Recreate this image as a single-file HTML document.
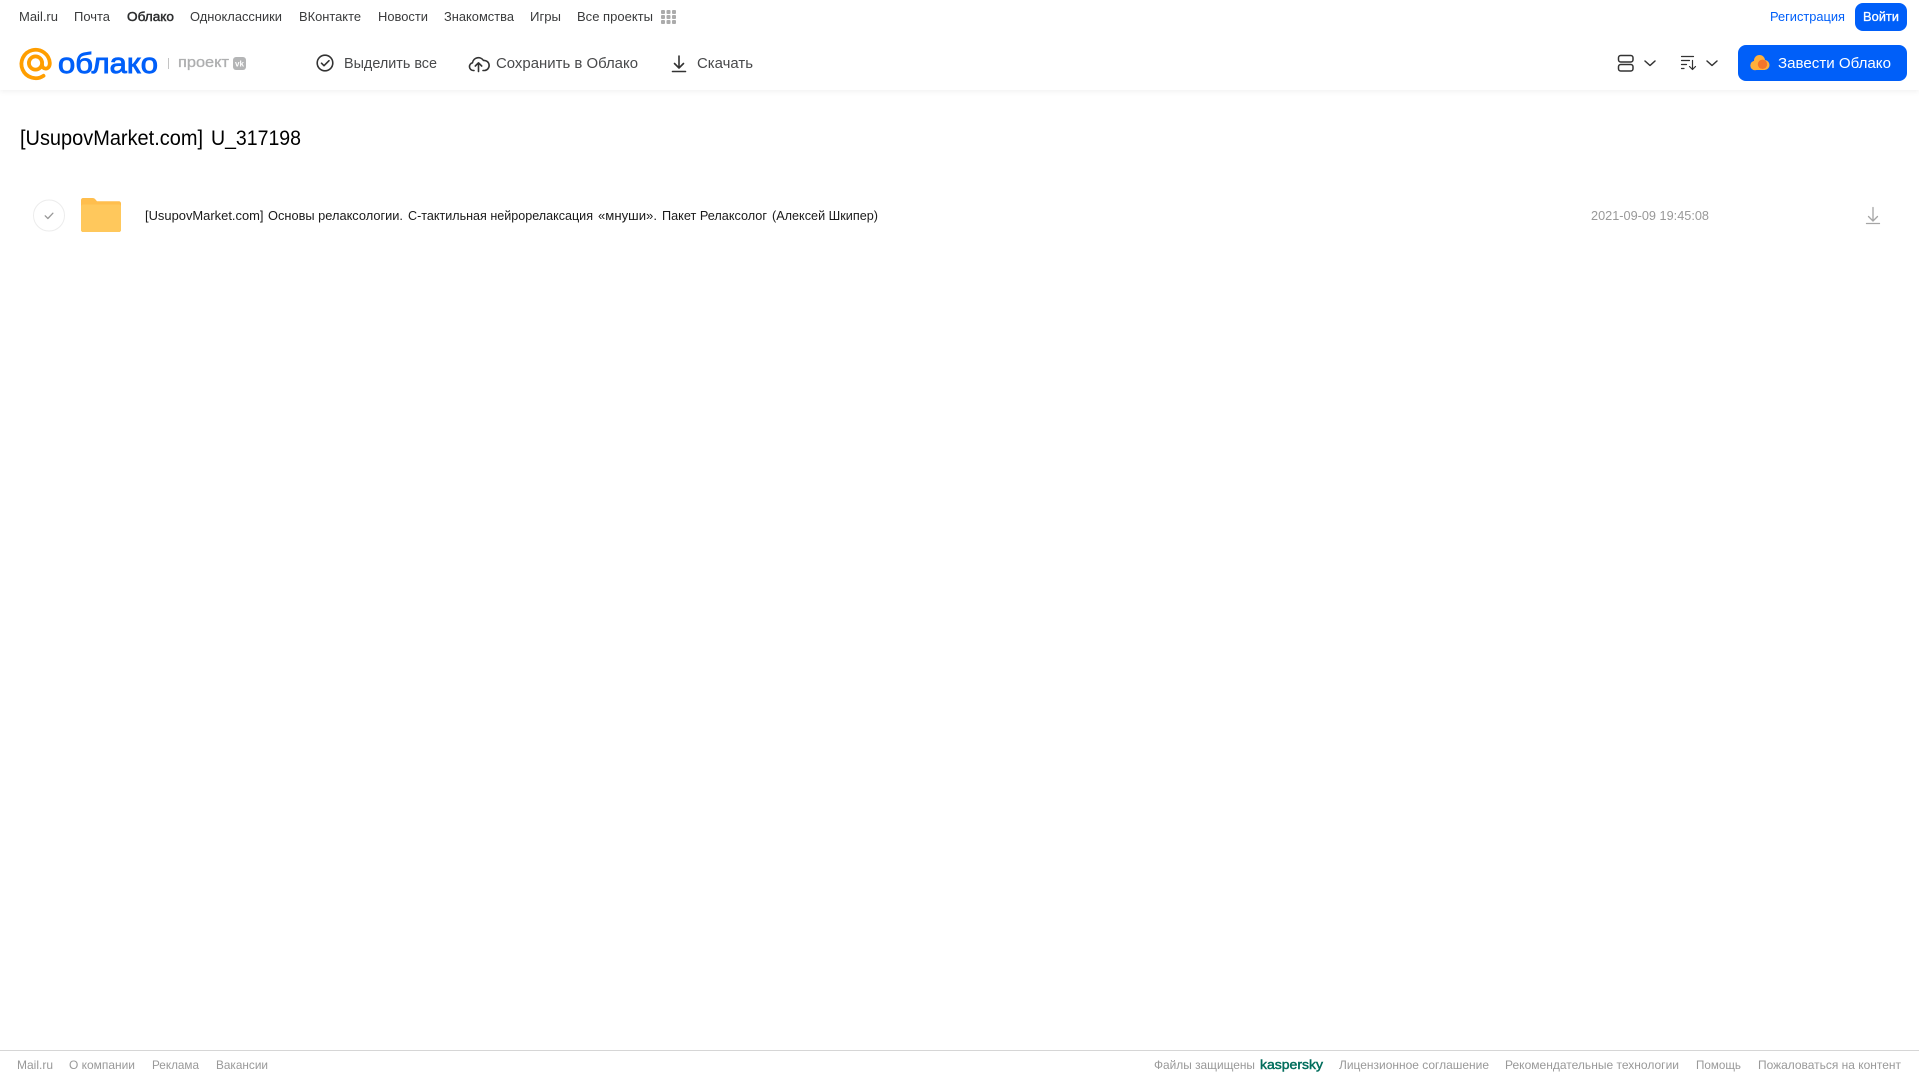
<!DOCTYPE html>
<html lang="ru">
<head>
<meta charset="utf-8">
<title>Облако</title>
<style>
html,body{margin:0;padding:0;background:#fff;width:1919px;height:1079px;overflow:hidden}
.shadow{position:absolute;left:0;top:0;width:1919px;height:90px;background:#fff;box-shadow:0 1px 6px rgba(0,0,0,.07)}
svg.page{position:absolute;left:0;top:0}
text{font-family:"Liberation Sans",sans-serif}
.nav{font-size:13px;fill:#3a3b3c}
.act{font-size:14.5px;fill:#48494b}
.foot{font-size:12px;fill:#999}
.row{font-size:13px;fill:#1a1a1a}
.ttl{font-size:21.5px;fill:#000}
</style>
</head>
<body>
<div class="shadow"></div>
<svg class="page" width="1919" height="1079" viewBox="0 0 1919 1079" xmlns="http://www.w3.org/2000/svg">
<!-- top nav -->
<text class="nav" x="19" y="21" textLength="39" lengthAdjust="spacingAndGlyphs">Mail.ru</text>
<text class="nav" x="74" y="21" textLength="36" lengthAdjust="spacingAndGlyphs">Почта</text>
<text class="nav" x="127" y="21" textLength="47" lengthAdjust="spacingAndGlyphs" style="fill:#2c2d2e;stroke:#2c2d2e;stroke-width:.45px">Облако</text>
<text class="nav" x="190" y="21" textLength="92" lengthAdjust="spacingAndGlyphs">Одноклассники</text>
<text class="nav" x="299" y="21" textLength="62" lengthAdjust="spacingAndGlyphs">ВКонтакте</text>
<text class="nav" x="378" y="21" textLength="50" lengthAdjust="spacingAndGlyphs">Новости</text>
<text class="nav" x="444" y="21" textLength="70" lengthAdjust="spacingAndGlyphs">Знакомства</text>
<text class="nav" x="530" y="21" textLength="31" lengthAdjust="spacingAndGlyphs">Игры</text>
<text class="nav" x="577" y="21" textLength="76" lengthAdjust="spacingAndGlyphs">Все проекты</text>
<g fill="#ababab">
<rect x="661" y="10" width="4" height="4" rx="1"/><rect x="666.5" y="10" width="4" height="4" rx="1"/><rect x="672" y="10" width="4" height="4" rx="1"/>
<rect x="661" y="15" width="4" height="4" rx="1"/><rect x="666.5" y="15" width="4" height="4" rx="1"/><rect x="672" y="15" width="4" height="4" rx="1"/>
<rect x="661" y="20" width="4" height="4" rx="1"/><rect x="666.5" y="20" width="4" height="4" rx="1"/><rect x="672" y="20" width="4" height="4" rx="1"/>
</g>
<text class="nav" x="1770" y="21" textLength="75" lengthAdjust="spacingAndGlyphs" style="fill:#005ff9">Регистрация</text>
<rect x="1855" y="3" width="52" height="28" rx="8" fill="#005ff9"/>
<text class="nav" x="1863" y="21" textLength="36" lengthAdjust="spacingAndGlyphs" style="fill:#fff;stroke:#fff;stroke-width:.3px">Войти</text>

<!-- logo -->
<g fill="none" stroke="#ff9e00" stroke-width="3.8" stroke-linecap="round">
<circle cx="35.5" cy="63" r="6.6"/>
<path d="M43.5 75.8A14.2 14.2 0 1 1 49.8 63c0 3.300-1.500 5.600-4.200 5.600-1.800 0-3.400-1.300-3.500-3.600"/>
</g>
<text x="58" y="73" textLength="100" lengthAdjust="spacingAndGlyphs" style="font-size:29px;fill:#005ff9;stroke:#005ff9;stroke-width:.9px">облако</text>
<rect x="168" y="58" width="1" height="11" fill="#c4c4c4"/>
<text x="178" y="67" textLength="51" lengthAdjust="spacingAndGlyphs" style="font-size:14.5px;fill:#aeafb0;stroke:#aeafb0;stroke-width:.3px">проект</text>
<rect x="233" y="57" width="13" height="13" rx="3" fill="#b4b5b6"/>
<text x="235" y="66.500" textLength="9" lengthAdjust="spacingAndGlyphs" style="font-size:8px;font-weight:700;fill:#fff">vk</text>

<!-- actions -->
<g fill="none" stroke="#333" stroke-width="1.600" stroke-linecap="round" stroke-linejoin="round">
<circle cx="325" cy="63" r="7.800"/>
<path d="M321.500 63.200l2.500 2.500 5-5"/>
<path d="M474 70.500h-.8a3.900 3.900 0 0 1-.7-7.700 6 6 0 0 1 11-2.300 4.800 4.800 0 0 1 1.200 10h-1.700"/>
<path d="M478.500 71.500V63M475.300 66l3.200-3.200 3.200 3.200"/>
<path d="M679 56v12M674.500 63.500l4.500 4.500 4.500-4.500"/>
<path d="M672.500 71.500h13"/>
</g>
<text class="act" x="344" y="68" textLength="93" lengthAdjust="spacingAndGlyphs">Выделить все</text>
<text class="act" x="496" y="68" textLength="142" lengthAdjust="spacingAndGlyphs">Сохранить в Облако</text>
<text class="act" x="697" y="68" textLength="56" lengthAdjust="spacingAndGlyphs">Скачать</text>

<!-- right tools -->
<g fill="none" stroke="#333" stroke-width="1.500" stroke-linecap="round" stroke-linejoin="round">
<rect x="1618.500" y="55.500" width="14.500" height="6.500" rx="2.200"/>
<rect x="1618.500" y="64.500" width="14.500" height="6.500" rx="2.200"/>
<path d="M1645 61l5 4.500 5-4.500"/>
<path d="M1707 61l5 4.500 5-4.500"/>
<path d="M1681.500 56.500h12M1681.500 60.500h8M1681.500 64.500h5M1681.500 68.500h2.500M1692.500 60.500v9M1689.500 66.500l3 3 3-3" stroke-width="1.200"/>
</g>
<rect x="1738" y="45" width="169" height="36" rx="8" fill="#005ff9"/>
<g fill="#ffb03b">
<circle cx="1755" cy="65.500" r="4.700"/>
<circle cx="1759.500" cy="60.500" r="5.500"/>
<circle cx="1764.500" cy="65" r="5"/>
<rect x="1755" y="63" width="10" height="7"/>
</g>
<circle cx="1762.500" cy="64.300" r="4.700" fill="#f5752a"/>
<text x="1778" y="68" textLength="113" lengthAdjust="spacingAndGlyphs" style="font-size:14.5px;fill:#fff">Завести Облако</text>

<!-- title -->
<text class="ttl" x="20" y="145" textLength="183" lengthAdjust="spacingAndGlyphs">[UsupovMarket.com]</text>
<text class="ttl" x="211" y="145" textLength="90" lengthAdjust="spacingAndGlyphs">U_317198</text>

<!-- row -->
<circle cx="49" cy="215.500" r="15.500" fill="#fff" stroke="#ececec" stroke-width="1"/>
<path d="M45.200 215.800l2.700 2.700 5-5.300" fill="none" stroke="#999" stroke-width="1.300" stroke-linecap="round" stroke-linejoin="round"/>
<path d="M83 198h9.500c1.500 0 2.200.6 3 1.500l1.500 1.700h22c1.100 0 2 .9 2 2V230c0 1.100-.9 2-2 2H83c-1.100 0-2-.9-2-2V200c0-1.100.9-2 2-2z" fill="#ffbe4d"/>
<path d="M81 206.500c0-1.100.9-2 2-2h36c1.100 0 2 .9 2 2V230c0 1.100-.9 2-2 2H83c-1.100 0-2-.9-2-2z" fill="#ffc85c"/>
<text class="row" x="145" y="220" textLength="118.500" lengthAdjust="spacingAndGlyphs">[UsupovMarket.com]</text>
<text class="row" x="268" y="220" textLength="135" lengthAdjust="spacingAndGlyphs">Основы релаксологии.</text>
<text class="row" x="408" y="220" textLength="185" lengthAdjust="spacingAndGlyphs">С-тактильная нейрорелаксация</text>
<text class="row" x="598" y="220" textLength="59" lengthAdjust="spacingAndGlyphs">«мнуши».</text>
<text class="row" x="662" y="220" textLength="105" lengthAdjust="spacingAndGlyphs">Пакет Релаксолог</text>
<text class="row" x="772" y="220" textLength="106" lengthAdjust="spacingAndGlyphs">(Алексей Шкипер)</text>
<text x="1591" y="220" textLength="118" lengthAdjust="spacingAndGlyphs" style="font-size:13px;fill:#999">2021-09-09 19:45:08</text>
<path d="M1873 207.500v13M1868.500 216.500l4.500 4.500 4.500-4.500M1866.500 223.500h13" fill="none" stroke="#a5a5a5" stroke-width="1.300" stroke-linecap="round" stroke-linejoin="round"/>

<!-- footer -->
<rect x="0" y="1050" width="1919" height="1" fill="#d6d6d6"/>
<text class="foot" x="17" y="1069" textLength="36" lengthAdjust="spacingAndGlyphs">Mail.ru</text>
<text class="foot" x="69" y="1069" textLength="66" lengthAdjust="spacingAndGlyphs">О компании</text>
<text class="foot" x="152" y="1069" textLength="47" lengthAdjust="spacingAndGlyphs">Реклама</text>
<text class="foot" x="216" y="1069" textLength="52" lengthAdjust="spacingAndGlyphs">Вакансии</text>
<text class="foot" x="1154" y="1069" textLength="101" lengthAdjust="spacingAndGlyphs">Файлы защищены</text>
<text x="1260" y="1069" textLength="63" lengthAdjust="spacingAndGlyphs" style="font-size:13px;fill:#006d5c;stroke:#006d5c;stroke-width:.45px">kaspersky</text>
<text class="foot" x="1339" y="1069" textLength="150" lengthAdjust="spacingAndGlyphs">Лицензионное соглашение</text>
<text class="foot" x="1505" y="1069" textLength="174" lengthAdjust="spacingAndGlyphs">Рекомендательные технологии</text>
<text class="foot" x="1696" y="1069" textLength="45" lengthAdjust="spacingAndGlyphs">Помощь</text>
<text class="foot" x="1758" y="1069" textLength="143" lengthAdjust="spacingAndGlyphs">Пожаловаться на контент</text>
</svg>
</body>
</html>
